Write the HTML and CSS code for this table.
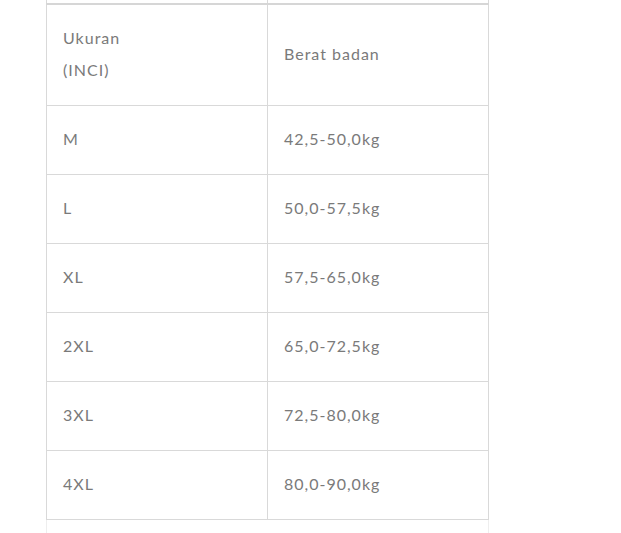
FILE: index.html
```html
<!DOCTYPE html>
<html>
<head>
<meta charset="utf-8">
<link rel="stylesheet" href="styles.css">
</head>
<body>
<div class="wrap">
<table class="size-table">
  <tr class="ghost"><td></td><td></td></tr>
  <tr class="head"><td>Ukuran<br>(INCI)</td><td>Berat badan</td></tr>
  <tr><td>M</td><td>42,5-50,0kg</td></tr>
  <tr><td>L</td><td>50,0-57,5kg</td></tr>
  <tr><td>XL</td><td>57,5-65,0kg</td></tr>
  <tr><td>2XL</td><td>65,0-72,5kg</td></tr>
  <tr><td>3XL</td><td>72,5-80,0kg</td></tr>
  <tr><td>4XL</td><td>80,0-90,0kg</td></tr>
</table>
<div class="tail"></div>
</div>
</body>
</html>
```

FILE: styles.css
```css
html, body {
  margin: 0;
  padding: 0;
  background: #fff;
}
.wrap {
  margin-left: 46px;
  width: 443px;
}
.size-table {
  border-collapse: collapse;
  width: 443px;
  table-layout: fixed;
  font-family: Lato, sans-serif;
  font-size: 16px;
  letter-spacing: 1px;
  color: #7a7a7a;
}
.size-table td {
  border: 1px solid #d9d9d9;
  padding: 17px 16px 19px;
  line-height: 32px;
  vertical-align: middle;
}
.size-table tr.ghost td {
  padding: 0;
  height: 3px;
  line-height: 0;
  border-top: none;
  border-bottom: 2px solid #d6d6d6;
}
.tail {
  height: 20px;
  border-left: 1px solid #eeeeee;
  border-right: 1px solid #eeeeee;
}
```
